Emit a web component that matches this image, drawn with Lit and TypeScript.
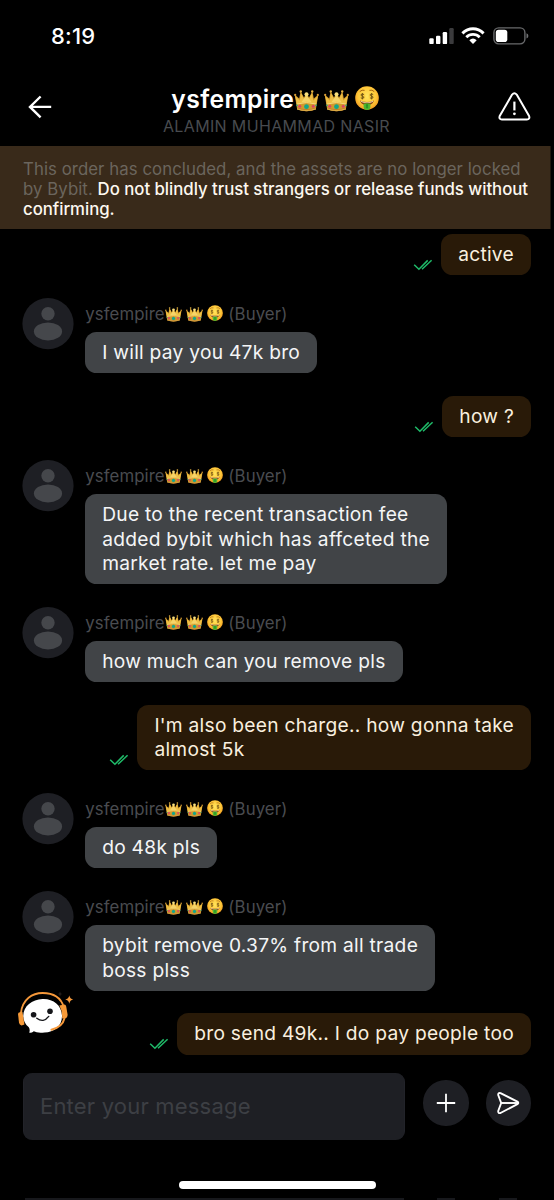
import { LitElement, html, css, svg } from "lit";
import { customElement, property } from "lit/decorators.js";

@customElement("crown-icon")
class CrownIcon extends LitElement {
  static styles = css`
    :host { display: inline-block; width: 25px; height: 22px; }
    svg { display: block; width: 100%; height: 100%; }
  `;
  render() {
    return html`<svg viewBox="0 0 25 22" preserveAspectRatio="none">
      <path d="M3.2 19.4 L.6 4.6 L5.2 8.6 L6.6 1.4 L10 7.6 L12.5 2.6 L15 7.6 L18.4 1.4 L19.8 8.6 L24.4 4.6 L21.8 19.4 Q12.5 23 3.2 19.4Z" fill="#d39a2b"/>
      <path d="M2.8 14 L1.2 6 L5.8 10.4 L7 3 L10.2 9.4 L12.5 4 L14.8 9.4 L18 3 L19.2 10.4 L23.8 6 L22.2 14 Q12.5 11 2.8 14Z" fill="#eebf45"/>
      <path d="M7.4 12.2 L12.5 5 L17.6 12.2 Q12.5 11.4 7.4 12.2Z" fill="#f6d468"/>
      <path d="M2.9 17.4 Q12.5 21 22.1 17.4 L21.8 19.6 Q12.5 23 3.2 19.6Z" fill="#b97a28"/>
      <path d="M2.7 14 Q12.5 11.2 22.3 14" fill="none" stroke="#f8df84" stroke-width=".9"/>
      <path d="M3 18.8 Q12.5 22.2 22 18.8" fill="none" stroke="#e9c053" stroke-width=".8"/>
      <circle cx="12.5" cy="4.2" r="2" fill="#f9df7c"/>
      <circle cx="6.8" cy="1.5" r="1.2" fill="#e7b544"/><circle cx="18.2" cy="1.5" r="1.2" fill="#e7b544"/>
      <circle cx="1.2" cy="4.9" r="1.1" fill="#d79c35"/><circle cx="23.8" cy="4.9" r="1.1" fill="#d79c35"/>
      <circle cx="12.5" cy="16.7" r="2.4" fill="#12a68b"/>
      <circle cx="5.8" cy="16.3" r="1.5" fill="#dc4568"/><circle cx="19.2" cy="16.3" r="1.5" fill="#dc4568"/>
      <circle cx="2.9" cy="15.4" r=".8" fill="#26a287"/><circle cx="22.1" cy="15.4" r=".8" fill="#26a287"/>
    </svg>`;
  }
}

@customElement("money-face")
class MoneyFace extends LitElement {
  static styles = css`
    :host { display: inline-block; width: 24px; height: 24px; }
    svg { display: block; width: 100%; height: 100%; }
  `;
  render() {
    return html`<svg viewBox="0 0 24 24">
      <defs>
        <radialGradient id="face" cx="50%" cy="42%" r="58%">
          <stop offset="0" stop-color="#ffe45c"/><stop offset=".65" stop-color="#ffc83a"/><stop offset="1" stop-color="#f29a1e"/>
        </radialGradient>
      </defs>
      <circle cx="12" cy="12" r="11.8" fill="url(#face)"/>
      <path d="M5 5.4 Q7 3.4 9.2 4.2 M14.8 4.2 Q17 3.4 19 5.4" fill="none" stroke="#a4640f" stroke-width="1" stroke-linecap="round"/>
      <ellipse cx="7.4" cy="10.2" rx="2.9" ry="3.4" fill="#f9cc40"/><ellipse cx="16.6" cy="10.2" rx="2.9" ry="3.4" fill="#f9cc40"/>
      ${[7.4, 16.6].map((x) => svg`<g transform="translate(${x} 10.2)"><path d="M1.6 -1.6 Q0 -2.8 -1.3 -1.7 Q-1.9 -.5 0 0 Q2.1 .5 1.3 1.7 Q0 2.8 -1.6 1.6 M0 -3.2 V3.2" fill="none" stroke="#6b4e14" stroke-width=".9"/></g>`)}
      <path d="M5 14.6 Q12 17.6 19 14.6 Q17.6 19.2 12 19.4 Q6.4 19.2 5 14.6Z" fill="#8a4212"/>
      <path d="M5.8 15 Q12 17.8 18.2 15 L17.8 16 Q12 18.2 6.2 16Z" fill="#fff1c8"/>
      <path d="M8.6 17.8 Q12 16.6 15.4 17.8 V21 Q15.2 23.9 12 23.9 Q8.8 23.9 8.6 21Z" fill="#4fb92f"/>
      <path d="M12 17.8 V22.4 M10.8 19.2 H13.2 M10.8 21 H13.2" fill="none" stroke="#1f7e27" stroke-width=".8"/>
    </svg>`;
  }
}

@customElement("chat-message")
class ChatMessage extends LitElement {
  @property({ attribute: false }) lines: string[] = [];
  @property({ type: Boolean }) mine = false;

  static styles = css`
    :host { display: block; }
    .row { display: flex; align-items: flex-start; }
    .sent { justify-content: flex-end; align-items: flex-end; }
    .avatar { width: 52px; height: 52px; margin: 0 11.2px 0 -.5px; flex: none; display: block; }
    .body { display: flex; flex-direction: column; align-items: flex-start; }
    .name { height: 34.2px; display: flex; align-items: flex-start; font-size: 16.8px; line-height: 32px; letter-spacing: .1px; color: #4a4c50; white-space: nowrap; }
    crown-icon { width: 17px; height: 15px; margin-top: 8.6px; }
    crown-icon + crown-icon { margin-left: 4.2px; }
    money-face { width: 16px; height: 16px; margin: 7.4px 5px 0 4.4px; }
    .bubble { box-sizing: border-box; padding: 8px 17px 8.8px; border-radius: 11.5px; background: #414447; color: #f4f5f6; font-size: 19.2px; line-height: 24.3px; letter-spacing: .26px; white-space: nowrap; }
    .sent .bubble { background: #291a08; color: #f9efdf; }
    .ticks { width: 20px; height: 14px; margin: 0 8px 3.2px 0; flex: none; }
  `;

  render() {
    const bubble = html`<div class="bubble">${this.lines.map((l) => html`<div>${l}</div>`)}</div>`;
    if (this.mine)
      return html`<div class="row sent">
        <svg class="ticks" viewBox="0 0 20 14" fill="none" stroke="#1fbb69" stroke-width="1.5"><path d="M1.2 6.8 L5.9 11.3 L14.7 2.4"/><path d="M9 11.3 L18.6 2.2"/></svg>
        ${bubble}
      </div>`;
    return html`<div class="row">
      <svg class="avatar" viewBox="0 0 52 52"><circle cx="26" cy="25.7" r="25.6" fill="#1e1f24"/><circle cx="26" cy="15.8" r="6.7" fill="#45474b"/><ellipse cx="26" cy="33.4" rx="14.1" ry="9" fill="#45474b"/></svg>
      <div class="body">
        <div class="name"><span>ysfempire</span><crown-icon></crown-icon><crown-icon></crown-icon><money-face></money-face><span>(Buyer)</span></div>
        ${bubble}
      </div>
    </div>`;
  }
}

const MESSAGES: { mine?: boolean; lines: string[] }[] = [
  { mine: true, lines: ["active"] },
  { lines: ["I will pay you 47k bro"] },
  { mine: true, lines: ["how ?"] },
  { lines: ["Due to the recent transaction fee", "added bybit which has affceted the", "market rate. let me pay"] },
  { lines: ["how much can you remove pls"] },
  { mine: true, lines: ["I'm also been charge.. how gonna take", "almost 5k"] },
  { lines: ["do 48k pls"] },
  { lines: ["bybit remove 0.37% from all trade", "boss plss"] },
  { mine: true, lines: ["bro send 49k.. I do pay people too"] },
];

@customElement("app-root")
class AppRoot extends LitElement {
  static styles = css`
    :host { display: flex; flex-direction: column; position: relative; box-sizing: border-box; width: 554px; height: 1200px; overflow: hidden; background: #000; color: #fff; font-family: Inter, "Liberation Sans", sans-serif; }
    svg { display: block; flex: none; }
    .status { height: 72px; flex: none; display: flex; align-items: center; justify-content: space-between; box-sizing: border-box; padding: 0 25.5px 0 51px; }
    .time { font-size: 22px; font-weight: 500; line-height: 28px; letter-spacing: .2px; }
    .indicators { display: flex; align-items: center; gap: 7.5px; padding-bottom: 1px; }
    .header { height: 74px; flex: none; display: flex; justify-content: space-between; box-sizing: border-box; padding: 0 23px 0 28px; }
    .back { margin-top: 23px; }
    .warn { margin-top: 19px; }
    .who { display: flex; flex-direction: column; align-items: center; padding-top: 12px; }
    .title { display: flex; height: 32px; font-size: 24.7px; line-height: 31px; font-weight: 600; letter-spacing: .35px; }
    .title crown-icon { margin-top: 6px; }
    .title crown-icon + crown-icon { margin-left: 5px; }
    .title money-face { margin: 2px 0 0 5.5px; }
    .real { font-size: 16px; line-height: 20px; letter-spacing: .35px; color: #484b4f; white-space: nowrap; padding-left: 3px; }
    .banner { height: 83px; flex: none; box-sizing: border-box; width: 551px; padding: 13px 0 0 23px; background: #392a1a; border-right: 1px solid #1f170e; font-size: 16.8px; line-height: 20px; letter-spacing: .06px; color: #6b655d; white-space: nowrap; }
    .strong { font-weight: 500; letter-spacing: -.03px; color: #fdf8f0; }
    .thread { flex: none; display: flex; flex-direction: column; gap: 22.8px; padding: 5.2px 23px 0 22.5px; height: 839px; }
    .composer { flex: none; display: flex; height: 66px; align-items: flex-start; padding: 0 23px; }
    .field { box-sizing: border-box; width: 382.5px; height: 66.5px; border-radius: 9px; background: #1e1f24; padding-left: 16px; font-size: 22px; line-height: 66px; letter-spacing: .2px; color: #3d3f44; margin-right: 18px; border: 1px solid #222329; border-width: 0 1px; }
    .round { width: 45.4px; height: 45.4px; border-radius: 50%; background: #1e1f24; margin: 7px 16.8px 0 0; display: grid; place-items: center; }
    .round:last-child { margin-right: 0; }
    .home { flex: none; width: 197.5px; height: 8px; border-radius: 4px; background: #fff; margin: 41.5px 0 0 178.5px; }
    .mascot { position: absolute; left: 16px; top: 990px; }
    .below { flex: none; margin-top: 9px; height: 10px; display: flex; padding-left: 25px; }
    .edge { width: 379px; height: 10px; background: #17181c; }
    .arc { width: 18px; height: 10px; background: #17181c; margin-left: 33px; }
    .arc + .arc { margin-left: 44px; }
  `;

  render() {
    return html`
      <div class="status">
        <div class="time">8:19</div>
        <div class="indicators">
          <svg width="25" height="18" viewBox="0 0 25 18" fill="#fff"><rect x=".3" y="11.3" width="4.4" height="5.8" rx="1.2"/><rect x="7" y="8.7" width="4.4" height="8.4" rx="1.2"/><rect x="13.7" y="5" width="4.4" height="12.1" rx="1.2"/><rect x="20.3" y="1" width="4.4" height="16.1" rx="1.2" fill="#3b3b3d"/></svg>
          <svg width="24" height="18" viewBox="0 0 24 18" fill="none" stroke="#fff" stroke-width="3"><path d="M1.4 6.4 Q6.2 1.8 12 1.8 T22.6 6.4"/><path d="M5.3 10.2 Q8.2 7.3 12 7.3 T18.7 10.2" stroke-width="2.8"/><path d="M8.3 13.2 Q12 10 15.7 13.2 L12 17Z" fill="#fff" stroke="none"/></svg>
          <svg width="36" height="18" viewBox="0 0 36 18"><rect x=".9" y=".9" width="31" height="16" rx="4.8" fill="none" stroke="#68696b" stroke-width="1.4"/><rect x="2.8" y="2.8" width="11.5" height="12.2" rx="2.8" fill="#fff"/><path d="M33.5 6.2 Q35.4 7 35.4 8.9 T33.5 11.6Z" fill="#6f7072"/></svg>
        </div>
      </div>
      <div class="header">
        <svg class="back" width="24" height="24" viewBox="0 0 24 24" fill="none" stroke="#fff" stroke-width="2.4"><path d="M12.6 1.5 L2 11.9 L12.6 22.3 M2 11.9 H23.2"/></svg>
        <div class="who">
          <div class="title"><span>ysfempire</span><crown-icon></crown-icon><crown-icon></crown-icon><money-face></money-face></div>
          <div class="real">ALAMIN MUHAMMAD NASIR</div>
        </div>
        <svg class="warn" width="33" height="31" viewBox="0 0 33 31" fill="none" stroke="#fff" stroke-width="2" stroke-linejoin="round"><path d="M14.1 3.6 Q16.4 1 18.7 3.6 L31.1 25 Q32.2 28.2 28.8 28.6 H4 Q.6 28.2 1.7 25Z"/><path d="M16.4 10.6 V19.4" stroke-width="2.2"/><circle cx="16.4" cy="22.8" r="1.4" fill="#fff" stroke="none"/></svg>
      </div>
      <div class="banner">
        <div>This order has concluded, and the assets are no longer locked</div>
        <div>by Bybit. <span class="strong">Do not blindly trust strangers or release funds without</span></div>
        <div class="strong">confirming.</div>
      </div>
      <div class="thread">
        ${MESSAGES.map((m) => html`<chat-message ?mine=${m.mine} .lines=${m.lines}></chat-message>`)}
      </div>
      <div class="composer">
        <div class="field">Enter your message</div>
        <div class="round"><svg width="20" height="20" viewBox="0 0 20 20" stroke="#fff" stroke-width="1.8"><path d="M10 .8 V19.2 M.8 10 H19.2"/></svg></div>
        <div class="round"><svg width="24" height="24" viewBox="0 0 24 24" fill="none" stroke="#fff" stroke-width="1.9" stroke-linejoin="round"><path d="M4.5 2.1 L21.4 10.6 Q23.2 12 21.4 13.2 L4.5 22 Q2 22.7 2.2 20 L5.2 12 L2.2 4 Q2 1.4 4.5 2.1Z"/><path d="M5.2 12 H22"/></svg></div>
      </div>
      <div class="home"></div>
      <div class="below"><div class="edge"></div><div class="arc"></div><div class="arc"></div></div>
      <svg class="mascot" width="60" height="46" viewBox="0 0 60 46">
        <path d="M26.6 9 C37 8.6 45.6 15 46 25.5 C46.4 36 38 42.4 28.5 42.4 Q21 43.2 17.8 41.2 Q15.2 43.4 13.2 42.6 Q14.4 39.4 12.6 37 Q7.4 33 7.2 26 C7.4 16 16 9.4 26.6 9Z" fill="#fff"/>
        <path d="M4.9 23 C6.6 9 16.4 3 26.6 3 C37.4 3 45 8 47.8 17" fill="none" stroke="#f5983a" stroke-width="1.8"/>
        <path d="M3 22.6 L6.4 21.8 L8.4 34.4 L5.6 35.4 Q3.5 35.2 3 32.8 L2.1 24.4 Q2 23 3 22.6Z" fill="#f79a38"/>
        <path d="M43.4 15.6 L48.4 14.6 Q49.8 14.8 50.2 16.4 L51.6 24.6 Q51.8 27.2 50 28 L46 28.6 Q46.8 22 43.4 15.6Z" fill="#f79a38"/>
        <path d="M48.6 28 Q46.5 37 35.4 39.8" fill="none" stroke="#f5983a" stroke-width="2" stroke-linecap="round"/>
        <circle cx="17.6" cy="24.7" r="2.8" fill="#15161a"/><circle cx="34" cy="21.3" r="2.8" fill="#15161a"/>
        <path d="M20.8 28.2 Q27.4 33.4 32.7 26.4" fill="none" stroke="#15161a" stroke-width="1.4" stroke-linecap="round"/>
        <path d="M53.3 5.5 Q54 9 57.2 9.6 Q54 10.2 53.3 13.7 Q52.6 10.2 49.2 9.6 Q52.6 9 53.3 5.5Z" fill="#f5983a"/>
        <path d="M44 1.4 L44.8 3.4 L46.6 4 L44.8 4.6 L44 6.6 L43.2 4.6 L41.4 4 L43.2 3.4Z" fill="#25201e"/>
      </svg>
    `;
  }
}
